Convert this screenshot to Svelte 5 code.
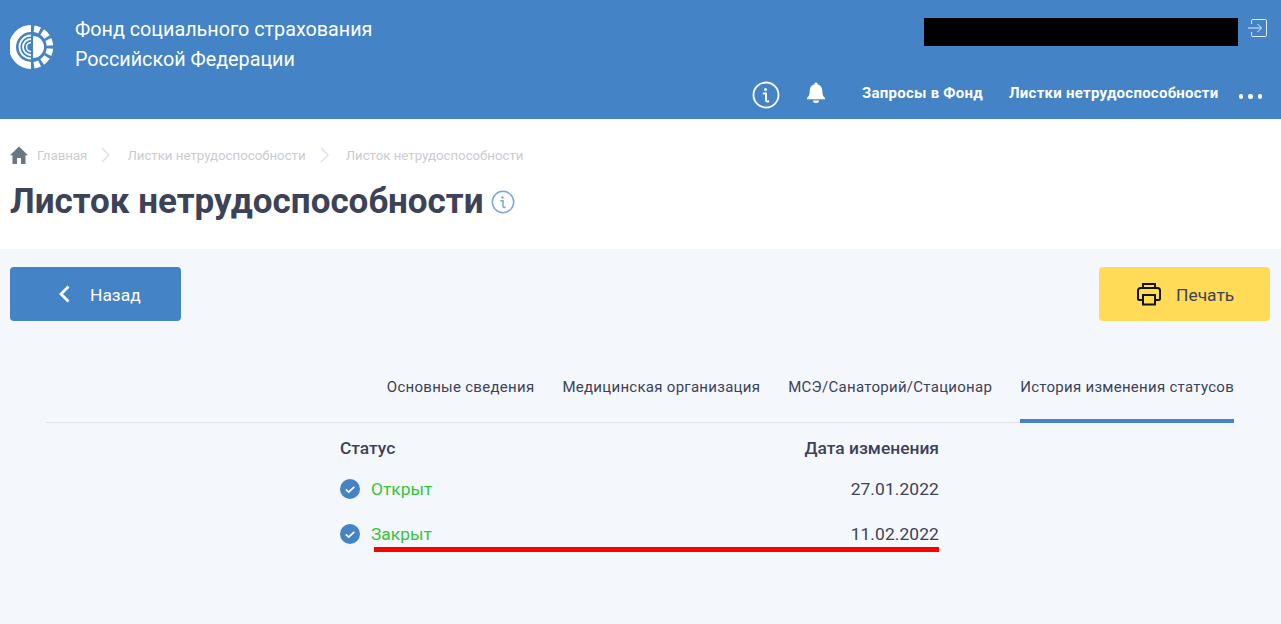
<script>
  let tabs = [
    { name: "Основные сведения" },
    { name: "Медицинская организация" },
    { name: "МСЭ/Санаторий/Стационар" },
    { name: "История изменения статусов", active: true }
  ];
  let history = [
    { status: "Открыт", date: "27.01.2022" },
    { status: "Закрыт", date: "11.02.2022" }
  ];
</script>

<header class="header">
  <div class="brand">
    <svg class="logo" width="44" height="46" viewBox="0 0 44 46">
      <g fill="none" stroke="#fff">
        <path d="M21 4.500A18.500 18.500 0 0 0 21 41.500" stroke-width="7" />
        <path d="M21 11.500A11.500 11.500 0 0 0 21 34.500" stroke-width="1.800" />
        <path d="M21 15A8 8 0 0 0 21 31" stroke-width="1.800" />
        <path d="M21 18.500A4.500 4.500 0 0 0 21 27.500" stroke-width="1.500" />
        <g stroke-width="6.500">
          <path d="M24 4.800A18.500 18.500 0 0 1 29.600 6.500" />
          <path d="M32.200 8A18.500 18.500 0 0 1 37 13" />
          <path d="M38.300 15.500A18.500 18.500 0 0 1 40 21.500" />
          <path d="M40 24.500A18.500 18.500 0 0 1 38.300 30.500" />
          <path d="M37 33A18.500 18.500 0 0 1 32.200 38" />
          <path d="M29.600 39.500A18.500 18.500 0 0 1 24 41.200" />
        </g>
      </g>
      <path d="M23 12A11 11 0 0 1 23 34Z" fill="#fff" />
    </svg>
    <div class="org">Фонд социального страхования<br />Российской Федерации</div>
  </div>
  <div class="header-right">
    <div class="user">
      <div class="redacted"></div>
      <svg width="20" height="20" viewBox="0 0 20 20" fill="none" stroke="#e3edf7" stroke-width="1">
        <path d="M3.500 6V2.800A1.300 1.300 0 0 1 4.800 1.500H17.200A1.300 1.300 0 0 1 18.500 2.800V17.200A1.300 1.300 0 0 1 17.200 18.500H4.800A1.300 1.300 0 0 1 3.500 17.200V14" />
        <path d="M0 10H13M9.500 6L13.500 10L9.500 14" />
      </svg>
    </div>
    <nav class="topnav">
      <svg class="top-info" width="28" height="28" viewBox="0 0 28 28" fill="none" stroke="#fff">
        <circle cx="14" cy="14" r="12.500" stroke-width="1.800" />
        <circle cx="13.500" cy="8.500" r="1.500" fill="#fff" stroke="none" />
        <path d="M10.800 12.500H14V19C14 20.500 15.200 20.800 17 20" stroke-width="2" />
      </svg>
      <svg class="bell" width="20" height="22" viewBox="0 0 20 22" fill="#fff">
        <path d="M10 0.500A1.800 1.800 0 0 1 11.700 2.500C14.800 3.200 16.300 5.800 16.300 9C16.300 13 17.300 14.500 19 16V17.200H1V16C2.700 14.500 3.700 13 3.700 9C3.700 5.800 5.200 3.200 8.300 2.500A1.800 1.800 0 0 1 10 0.500Z" />
        <path d="M7 18.500H13A3 2.500 0 0 1 7 18.500Z" />
      </svg>
      <span class="navlink first">Запросы в Фонд</span>
      <span class="navlink">Листки нетрудоспособности</span>
      <span class="dots"><i></i><i></i><i></i></span>
    </nav>
  </div>
</header>

<section class="titlebar">
  <div class="crumbs">
    <svg class="home" width="18" height="18" viewBox="0 0 18 18" fill="#6b7683">
      <path d="M9 0.500L18 9.300H15.500V18H11V12H7V18H2.500V9.300H0Z" />
    </svg>
    <span class="crumb">Главная</span>
    <svg class="sep" width="9" height="16" viewBox="0 0 9 16" fill="none" stroke="#dfe1e4" stroke-width="1.500"><path d="M1 1L8 8L1 15" /></svg>
    <span class="crumb">Листки нетрудоспособности</span>
    <svg class="sep" width="9" height="16" viewBox="0 0 9 16" fill="none" stroke="#dfe1e4" stroke-width="1.500"><path d="M1 1L8 8L1 15" /></svg>
    <span class="crumb">Листок нетрудоспособности</span>
  </div>
  <div class="heading">
    <h1>Листок нетрудоспособности</h1>
    <svg width="24" height="24" viewBox="0 0 24 24" fill="none" stroke="#78a6d8">
      <circle cx="12" cy="12" r="10.700" stroke-width="1.500" />
      <circle cx="11.500" cy="7.500" r="1.200" fill="#78a6d8" stroke="none" />
      <path d="M9.300 10.800H12V16.300C12 17.500 13 17.800 14.500 17" stroke-width="1.500" />
    </svg>
  </div>
</section>

<main class="content">
  <div class="actions">
    <button class="btn back">
      <svg width="12" height="18" viewBox="0 0 12 18" fill="none" stroke="#fff" stroke-width="2.800"><path d="M10.500 1.500L3 9L10.500 16.500" /></svg>
      <span>Назад</span>
    </button>
    <button class="btn print">
      <svg width="24" height="24" viewBox="0 0 24 24" fill="none" stroke="#14130c" stroke-width="2">
        <path d="M6 6V2H18V6" />
        <path d="M6 18H2.500A1.500 1.500 0 0 1 1 16.500V8.500A2.500 2.500 0 0 1 3.500 6H20.500A2.500 2.500 0 0 1 23 8.500V16.500A1.500 1.500 0 0 1 21.500 18H18" />
        <path d="M6 13H18V22.500H6Z" />
      </svg>
      <span>Печать</span>
    </button>
  </div>

  <div class="tabs">
    {#each tabs as tab}
      <div class="tab" class:active={tab.active}>{tab.name}</div>
    {/each}
  </div>

  <div class="table">
    <div class="row head">
      <span>Статус</span>
      <span>Дата изменения</span>
    </div>
    {#each history as item}
      <div class="row">
        <span class="status">
          <svg width="20" height="20" viewBox="0 0 20 20">
            <circle cx="10" cy="10" r="10" fill="#4483c5" />
            <path d="M5.800 10.300L8.700 13L14.300 7.800" fill="none" stroke="#fff" stroke-width="1.700" />
          </svg>
          {item.status}
        </span>
        <span class="date">{item.date}</span>
      </div>
    {/each}
    <div class="redline"></div>
  </div>
</main>

<style>
  :global(body) {
    background: #f4f7fc;
    font-family: Roboto, "Liberation Sans", sans-serif;
    color: #3c4257;
  }

  .header {
    height: 119px;
    background: #4483c5;
    display: flex;
    justify-content: space-between;
    color: #fff;
  }
  .brand {
    display: flex;
    padding: 15px 0 0 10px;
  }
  .logo {
    margin-top: 9px;
  }
  .org {
    font-size: 19.75px;
    line-height: 30px;
    margin-left: 21px;
  }
  .header-right {
    display: flex;
    flex-direction: column;
    align-items: flex-end;
  }
  .user {
    display: flex;
    margin-top: 18px;
    padding-right: 13px;
    gap: 10px;
  }
  .redacted {
    width: 314px;
    height: 28px;
    background: #000;
  }
  .topnav {
    display: flex;
    align-items: center;
    margin-top: 35px;
    padding-right: 19px;
  }
  .top-info {
    margin-right: 26px;
  }
  .bell {
    margin-right: 36px;
    margin-top: -4px;
  }
  .navlink {
    font-size: 15px;
    letter-spacing: 0.25px;
    font-weight: 700;
    margin-right: 27px;
    margin-top: -4px;
  }
  .navlink.first {
    margin-right: 26px;
  }
  .dots {
    display: flex;
    gap: 5px;
    margin-left: -7px;
    margin-top: 3px;
  }
  .dots i {
    width: 4.5px;
    height: 4.5px;
    background: #fff;
    border-radius: 50%;
  }

  .titlebar {
    height: 130px;
    background: #fff;
    padding: 27px 10px 0;
    box-sizing: border-box;
  }
  .crumbs {
    display: flex;
    align-items: center;
    height: 18px;
    font-size: 13.25px;
    color: #c9cccf;
  }
  .home {
    margin-right: 9px;
  }
  .sep {
    margin: 0 17px 0 14px;
  }
  .heading {
    display: flex;
    align-items: center;
    margin-top: 17px;
  }
  h1 {
    margin: 0;
    font-size: 35px;
    line-height: 42px;
    font-weight: 700;
    color: #3c4257;
    margin-right: 7px;
  }

  .content {
    padding: 18px 11px 0 10px;
  }
  .actions {
    display: flex;
    justify-content: space-between;
  }
  .btn {
    height: 54px;
    border: none;
    border-radius: 4px;
    display: flex;
    align-items: center;
    font-family: inherit;
    font-size: 17.4px;
  }
  .btn span {
    margin-top: 1px;
  }
  .back {
    width: 171px;
    background: #4483c5;
    color: #fff;
    padding-left: 48px;
    gap: 20px;
  }
  .print {
    width: 171px;
    background: #ffdb58;
    color: #3c4257;
    padding-left: 38px;
    gap: 15px;
  }

  .tabs {
    display: flex;
    justify-content: flex-end;
    gap: 28px;
    margin: 56px 36px 0 36px;
    border-bottom: 1px solid #dfe4ea;
  }
  .tab {
    font-size: 15px;
    letter-spacing: 0.28px;
    padding: 0 0 22px;
    line-height: 20px;
    margin-bottom: -1px;
    color: #3c4257;
    border-bottom: 4px solid transparent;
  }
  .tab.active {
    border-bottom-color: #4483c5;
  }

  .table {
    position: relative;
    width: 599px;
    margin: 12px 0 0 330px;
  }
  .row {
    display: flex;
    justify-content: space-between;
    align-items: center;
    height: 45px;
    font-size: 17.4px;
  }
  .row.head {
    height: 26px;
    margin-bottom: 5px;
    font-weight: 500;
  }
  .status {
    display: flex;
    align-items: center;
    gap: 11px;
    color: #35c43c;
  }
  .date {
    color: #3c4257;
    letter-spacing: 0.1px;
  }
  .redline {
    position: absolute;
    left: 34px;
    right: 0;
    bottom: 4px;
    height: 5px;
    background: #f00;
  }
</style>
